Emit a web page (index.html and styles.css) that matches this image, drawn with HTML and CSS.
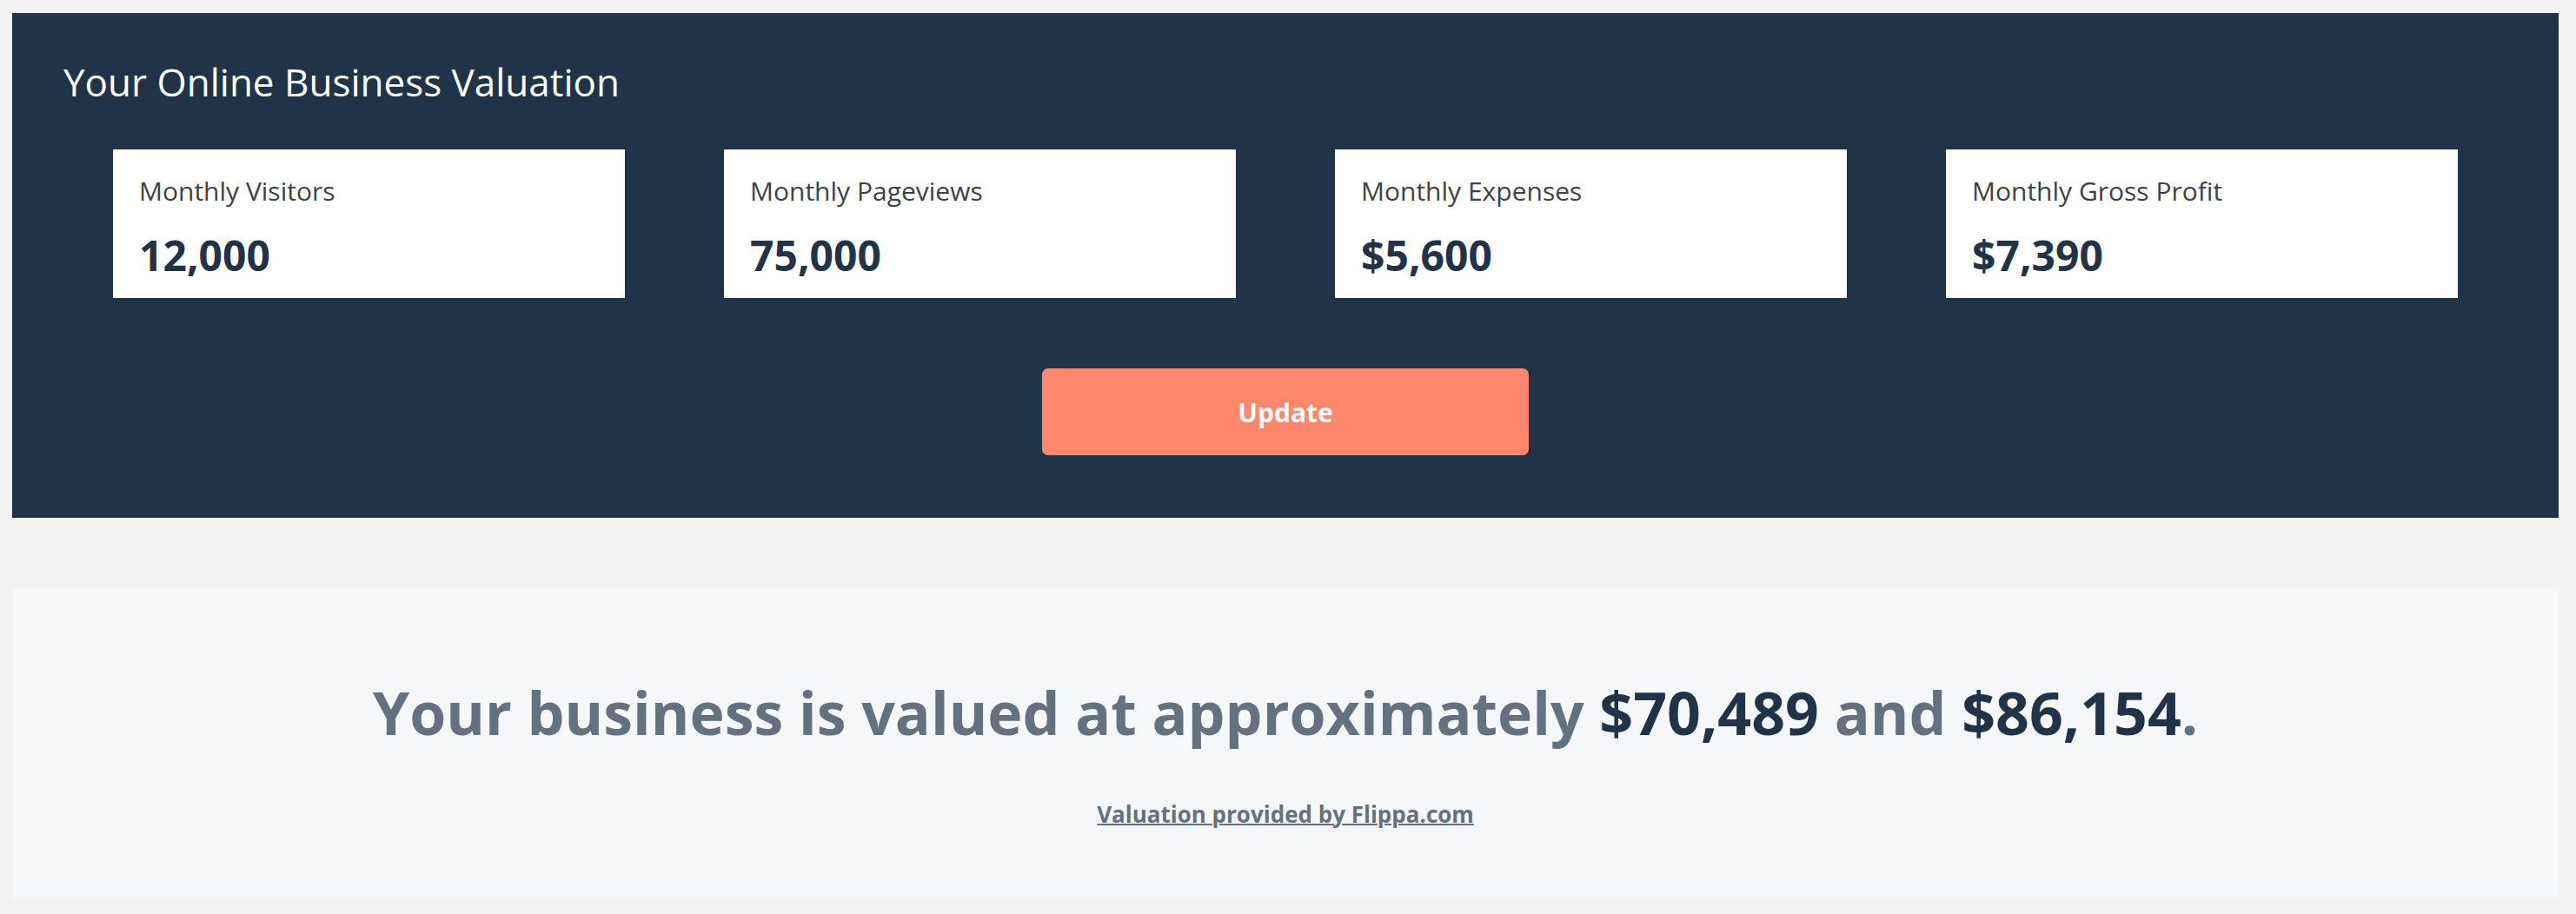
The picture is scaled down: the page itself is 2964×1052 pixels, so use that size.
FILE: index.html
```html
<!DOCTYPE html>
<html lang="en">
<head>
<meta charset="utf-8">
<title>Your Online Business Valuation</title>
<link rel="stylesheet" href="styles.css">
</head>
<body>
  <section class="calc">
    <h1 class="calc-title">Your Online Business Valuation</h1>
    <div class="metrics">
      <div class="metric">
        <div class="metric-label">Monthly Visitors</div>
        <div class="metric-value">12,000</div>
      </div>
      <div class="metric">
        <div class="metric-label">Monthly Pageviews</div>
        <div class="metric-value">75,000</div>
      </div>
      <div class="metric">
        <div class="metric-label">Monthly Expenses</div>
        <div class="metric-value">$5,600</div>
      </div>
      <div class="metric">
        <div class="metric-label">Monthly Gross Profit</div>
        <div class="metric-value">$7,390</div>
      </div>
    </div>
    <button class="update-btn" type="button">Update</button>
  </section>
  <section class="result">
    <h2 class="result-text">Your business is valued at approximately <span class="amount">$70,489</span> and <span class="amount">$86,154</span>.</h2>
    <a class="result-credit" href="#">Valuation provided by Flippa.com</a>
  </section>
</body>
</html>
```

FILE: styles.css
```css
html, body {
  margin: 0;
  padding: 0;
}

body {
  background: #f2f2f2;
  padding: 15px 20px 18px 14px;
  font-family: "Open Sans", "Noto Sans", "Liberation Sans", sans-serif;
}

.calc {
  background: #203449;
  height: 581px;
  box-sizing: border-box;
  padding: 57px 0 72px;
}

.calc-title {
  margin: 0 0 0 59px;
  font-size: 44px;
  line-height: 44px;
  font-weight: 400;
  color: #ffffff;
}

.metrics {
  display: grid;
  grid-template-columns: repeat(4, 1fr);
  column-gap: 114px;
  margin: 56px 116px 0;
}

.metric {
  background: #ffffff;
  height: 171px;
  box-sizing: border-box;
  padding: 33px 30px 0 30px;
}

.metric-label {
  font-size: 30px;
  line-height: 30px;
  color: #3f4245;
}

.metric-value {
  margin-top: 35px;
  font-size: 48px;
  line-height: 48px;
  font-weight: 700;
  color: #1f3349;
}

.update-btn {
  display: block;
  margin: 81px auto 0;
  width: 560px;
  height: 100px;
  border: 0;
  border-radius: 7px;
  background: #ff876b;
  color: #ffffff;
  font-family: inherit;
  font-size: 30px;
  font-weight: 700;
  cursor: pointer;
}

.result {
  margin-top: 80px;
  background: #f6f7f9;
  height: 358px;
  box-sizing: border-box;
  padding-top: 110px;
  text-align: center;
}

.result-text {
  margin: 0;
  font-size: 68px;
  line-height: 68px;
  font-weight: 700;
  color: #647180;
}

.amount {
  color: #1f3349;
}

.result-credit {
  display: inline-block;
  margin-top: 70px;
  font-size: 26px;
  line-height: 26px;
  font-weight: 700;
  color: #647180;
  text-decoration: underline;
  text-decoration-thickness: 2px;
}
```
